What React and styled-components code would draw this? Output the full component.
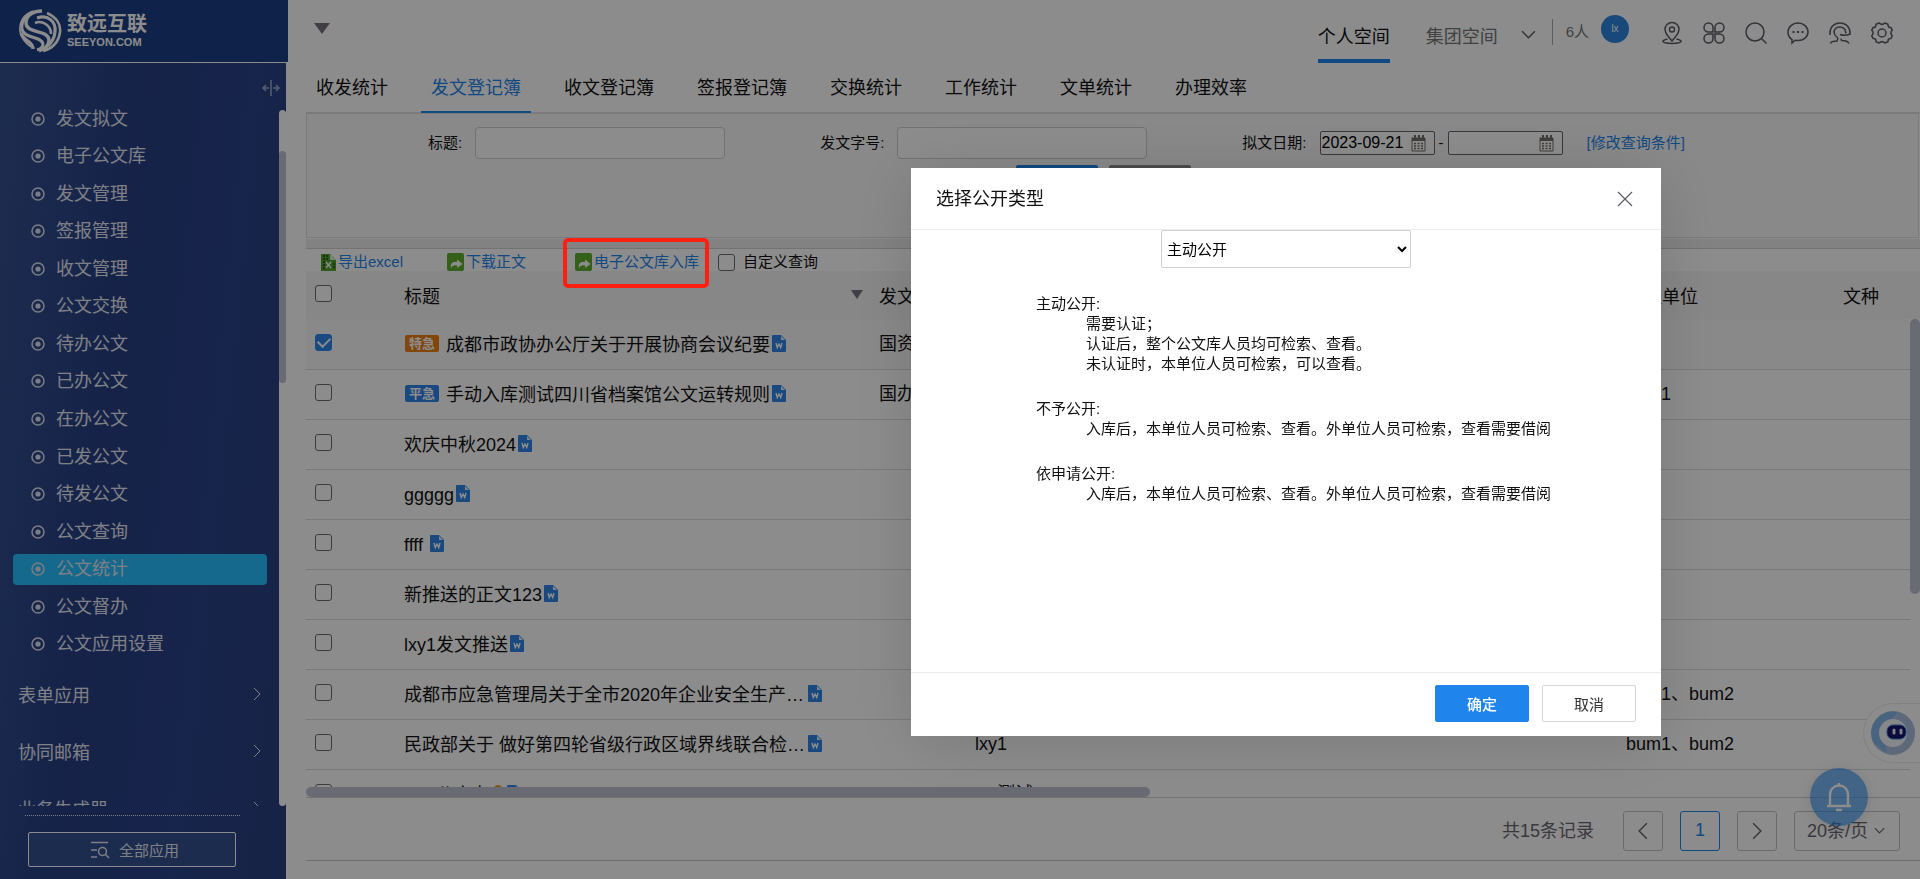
import React from "react";
import styled, { createGlobalStyle } from "styled-components";

const GlobalStyle = createGlobalStyle`
  * {
    box-sizing: border-box;
  }
  body {
    margin: 0;
    background: #fff;
    color: #111;
    font-family: "Liberation Sans", "Noto Sans CJK SC", sans-serif;
    font-size: 18px;
    line-height: 24px;
  }
  button, input, select {
    font-family: inherit;
    margin: 0;
  }
  a {
    text-decoration: none;
  }
  ul, dl, dd {
    margin: 0;
    padding: 0;
    list-style: none;
  }
`;

const Page = styled.div`
  display: flex;
  height: 100vh;
  overflow: hidden;
`;

/* ---------- sidebar ---------- */

const Side = styled.aside`
  flex: none;
  width: 288px;
  display: flex;
  flex-direction: column;
`;

const Brand = styled.div`
  display: flex;
  align-items: center;
  gap: 5px;
  height: 63px;
  padding-left: 18px;
  background: #1d3e85;
  border-bottom: 1px solid #fff;
  color: #fff;
`;

const BrandName = styled.div`
  font-size: 20px;
  font-weight: 700;
  line-height: 22px;
`;

const BrandSite = styled.div`
  font-size: 11px;
  font-weight: 700;
  line-height: 14px;
`;

const Nav = styled.nav`
  flex: 1;
  min-height: 0;
  margin-right: 2px;
  display: flex;
  flex-direction: column;
  background: linear-gradient(96deg, #35528f 0, #2d468b 24%, #283f84 38%, #2b4289 70%, #29407f 100%);
  color: #fff;
`;

const Collapse = styled.button`
  align-self: flex-end;
  height: 37px;
  padding: 12px 6px 0 0;
  border: 0;
  background: none;
  color: #a3aed2;
  line-height: 0;
`;

const NavScroll = styled.div`
  flex: 1;
  min-height: 0;
  display: flex;
  justify-content: space-between;
  padding-left: 13px;
  overflow: hidden;
`;

const NavBody = styled.div`
  width: 254px;
`;

const Menu = styled.ul`
  display: grid;
  grid-auto-rows: 1fr;
  align-items: center;
  height: 563px;
`;

const MenuLink = styled.a`
  display: flex;
  align-items: center;
  gap: 11px;
  height: 31px;
  padding-left: 18px;
  border-radius: 4px;
  color: #e6e9f2;
  background: ${(p) => (p.$active ? "#26bfff" : "none")};
`;

const Group = styled.button`
  display: flex;
  align-items: center;
  justify-content: space-between;
  width: 100%;
  height: 57px;
  padding: 0 3px 0 5px;
  border: 0;
  background: none;
  color: #e6e9f2;
  font-size: 18px;
`;

const Groups = styled.div`
  margin-top: 2px;
`;

const NavTrack = styled.div`
  width: 7px;
  margin-top: 10px;
  padding-top: 41px;
  border-radius: 4px;
  background: #fff;
`;

const NavThumb = styled.div`
  height: 232px;
  border-radius: 4px;
  background: #bdc1d3;
`;

const NavFoot = styled.div`
  margin: 9px 46px 12px 25px;
  padding: 16px 4px 0 3px;
  border-top: 1px dotted #dfe3ee;
`;

const AllApps = styled.button`
  display: flex;
  align-items: center;
  justify-content: center;
  gap: 10px;
  width: 100%;
  height: 35px;
  padding: 0 0 0 6px;
  border: 1px solid #fff;
  border-radius: 2px;
  background: #34508f;
  color: #e6e9f2;
  font-size: 15px;
`;

/* ---------- top bar ---------- */

const Main = styled.main`
  flex: 1;
  min-width: 0;
  display: flex;
  flex-direction: column;
  padding-left: 18px;
`;

const TopBar = styled.header`
  flex: none;
  display: flex;
  align-items: center;
  height: 63px;
  padding: 0 27px 0 8px;
`;

const Caret = styled.span`
  border: ${(p) => p.$size}px solid transparent;
  border-top: ${(p) => p.$size + 3}px solid #77717c;
  border-bottom: 0;
`;

const CaretButton = styled.button`
  display: flex;
  margin: 0 auto 6px 0;
  padding: 0;
  border: 0;
  background: none;
`;

const Spaces = styled.div`
  display: flex;
  align-self: stretch;
  gap: 36px;
  margin-right: 23px;
`;

const Space = styled.a`
  display: flex;
  align-items: center;
  padding-top: 15px;
  border-bottom: 4px solid ${(p) => (p.$active ? "#1f85ec" : "transparent")};
  color: ${(p) => (p.$active ? "#111" : "#777")};
`;

const PlainButton = styled.button`
  display: flex;
  padding: ${(p) => p.$drop || 0}px 0 0;
  border: 0;
  background: none;
  color: #5f5c66;
`;

const Online = styled.span`
  display: flex;
  align-items: center;
  height: 26px;
  margin: 0 12px 0 16px;
  padding-left: 13px;
  border-left: 1px solid #aaa;
  color: #777;
  font-size: 15px;
`;

const Avatar = styled.span`
  width: 28px;
  height: 28px;
  margin: 0 32px 6px 0;
  border-radius: 50%;
  background: #2e86e0;
  color: #fff;
  font-size: 10px;
  line-height: 28px;
  text-align: center;
`;

const Tools = styled.div`
  display: flex;
  gap: 20px;
  padding-top: 2px;
`;

const Tabs = styled.nav`
  flex: none;
  display: flex;
  gap: 23px;
  height: 50px;
  box-shadow: inset 0 -1px #e0e0e0;
`;

const Tab = styled.a`
  padding: 13px 10px 0;
  color: ${(p) => (p.$active ? "#1f85ec" : "#111")};
  border-bottom: 2px solid ${(p) => (p.$active ? "#1f85ec" : "transparent")};
`;

/* ---------- query form ---------- */

const Query = styled.form`
  flex: none;
  height: 125px;
  margin-right: 1px;
  padding-top: 13px;
  border: 1px solid #dedede;
  background: #f9f9f9;
  font-size: 15px;
`;

const Fields = styled.div`
  display: flex;
  align-items: center;
  gap: 95px;
  padding-left: 121px;
`;

const Field = styled.div`
  display: flex;
  align-items: center;
  gap: 13px;
`;

const TextInput = styled.input`
  width: 250px;
  height: 32px;
  padding: 0 8px;
  border: 1px solid #d0d0d6;
  border-radius: 4px;
  background: #fff;
  font-size: 15px;
`;

const DateRange = styled.div`
  display: flex;
  align-items: center;
  gap: 4px;
`;

const DateBox = styled.div`
  display: flex;
  align-items: center;
  width: 115px;
  height: 24px;
  border: 1px solid #6d6270;
  border-radius: 2px;
  background: #fff;
`;

const DateInput = styled.input`
  width: 90px;
  padding: 0 1px;
  border: 0;
  outline: 0;
  background: none;
  font-size: 16px;
`;

const BlueLink = styled.a`
  color: #1f85ec;
  margin-left: ${(p) => p.$indent || 0}px;
`;

const QueryButtons = styled.div`
  display: flex;
  justify-content: center;
  gap: 11px;
  padding: 6px 18px 0 0;
`;

const QueryButton = styled.button`
  width: 82px;
  height: 32px;
  border: 0;
  border-radius: 2px;
  background: ${(p) => (p.$primary ? "#1f85ec" : "#8a8a8f")};
  color: #fff;
  font-size: 15px;
`;

const Splitter = styled.div`
  flex: none;
  height: 10px;
  margin-top: 1px;
  background: #ededed;
  border-bottom: 1px solid #cfcfcf;
`;

/* ---------- toolbar and table ---------- */

const Toolbar = styled.div`
  flex: none;
  display: flex;
  align-items: center;
  height: 22px;
  padding: 4px 0 0 15px;
  font-size: 15px;
`;

const Action = styled.button`
  position: relative;
  display: flex;
  align-items: center;
  gap: 2px;
  height: 20px;
  margin-right: ${(p) => p.$gap}px;
  padding: 0;
  border: 0;
  background: none;
  color: #1f85ec;
  font-size: 15px;
  line-height: 20px;
`;

const Highlight = styled.span`
  position: absolute;
  inset: -14px -10px -16px -12px;
  z-index: 20;
  border: 4px solid #ff2012;
  border-radius: 5px;
  pointer-events: none;
`;

const CustomQuery = styled.label`
  display: flex;
  align-items: center;
  gap: 8px;
  line-height: 20px;
`;

const Check = styled.input.attrs({ type: "checkbox" })`
  appearance: none;
  display: inline-grid;
  place-content: center;
  width: 17px;
  height: 17px;
  border: 1px solid #6e6e74;
  border-radius: 3px;
  background: #fff;
  vertical-align: middle;
  &:checked {
    border-color: #2e86ec;
    background: #2e86ec;
  }
  &:checked::after {
    content: "";
    width: 6px;
    height: 10px;
    margin-bottom: 2px;
    border: solid #fff;
    border-width: 0 2px 2px 0;
    transform: rotate(45deg);
  }
`;

const Grid = styled.section`
  flex: 1;
  min-height: 0;
  display: flex;
`;

const GridView = styled.div`
  flex: 1;
  min-width: 0;
  overflow: hidden;
`;

const Table = styled.table`
  width: 100%;
  table-layout: fixed;
  border-collapse: collapse;
  th, td {
    padding: 0 8px;
    text-align: left;
    font-weight: 400;
    white-space: nowrap;
  }
  th {
    height: 48px;
    padding-top: 4px;
    background: #f6f6f6;
  }
  td {
    height: 50px;
    border-bottom: 1px solid #dddde2;
  }
  th:first-child, td:first-child {
    padding: 0 0 6px 9px;
  }
`;

const Row = styled.tr`
  background: ${(p) => (p.$selected ? "#f9f9f9" : "#fff")};
`;

const HeadCell = styled.div`
  display: flex;
  align-items: center;
  justify-content: space-between;
  ${Caret} {
    margin-bottom: 6px;
  }
`;

const TitleCell = styled.div`
  display: flex;
  align-items: center;
  gap: 2px;
  padding-top: 2px;
  svg {
    flex: none;
    margin-bottom: 3px;
  }
`;

const TitleText = styled.span`
  max-width: 402px;
  overflow: hidden;
  text-overflow: ellipsis;
  white-space: pre;
`;

const Tag = styled.span`
  width: 34px;
  height: 17px;
  margin: 0 5px 3px 1px;
  border-radius: 2px;
  background: ${(p) => p.$color};
  color: #fff;
  font-size: 13px;
  font-weight: 700;
  line-height: 17px;
  text-align: center;
`;

const Track = styled.div`
  width: 10px;
  border-top: 48px solid #f6f6f6;
`;

const Thumb = styled.div`
  height: 275px;
  border-radius: 5px;
  background: #bdc1d3;
`;

const BottomThumb = styled.div`
  flex: none;
  width: 844px;
  height: 10px;
  border-radius: 5px;
  background: #bdc1d3;
`;

const Pager = styled.footer`
  flex: none;
  display: flex;
  align-items: center;
  justify-content: flex-end;
  gap: 17px;
  height: 64px;
  margin-bottom: 18px;
  padding: 3px 20px 0 0;
  border-top: 1px solid #cfcfd2;
  border-bottom: 1px solid #c8c8c8;
  color: #6b6870;
`;

const Total = styled.span`
  margin-right: 12px;
`;

const PageButton = styled.button`
  display: flex;
  align-items: center;
  justify-content: center;
  width: 40px;
  height: 40px;
  padding: 0;
  border: 1px solid ${(p) => (p.$active ? "#1f85ec" : "#c4c4c8")};
  border-radius: 3px;
  background: #fff;
  color: ${(p) => (p.$active ? "#1f85ec" : "#6b6870")};
  font-size: 18px;
`;

const PageSize = styled.label`
  display: flex;
  align-items: center;
  width: 106px;
  height: 40px;
  padding-left: 12px;
  border: 1px solid #c4c4c8;
  border-radius: 3px;
  gap: 4px;
`;

const SizeSelect = styled.select`
  appearance: none;
  width: 63px;
  padding: 0;
  border: 0;
  background: none;
  color: #6b6870;
  font-size: 18px;
`;

/* ---------- floating buttons ---------- */

const Bell = styled.button`
  position: fixed;
  right: 52px;
  bottom: 53px;
  display: flex;
  align-items: center;
  justify-content: center;
  width: 58px;
  height: 58px;
  border: 0;
  border-radius: 50%;
  background: rgba(31, 133, 236, 0.6);
  box-shadow: 0 2px 14px rgba(0, 0, 0, 0.12);
  color: #fff;
`;

const Robot = styled.button`
  position: fixed;
  right: 0;
  bottom: 116px;
  display: flex;
  align-items: center;
  width: 57px;
  height: 60px;
  padding: 0 0 0 4px;
  border: 1px solid #ececec;
  border-right: 0;
  border-radius: 30px 0 0 30px;
  background: #fff;
`;

/* ---------- dialog ---------- */

const Mask = styled.div`
  position: fixed;
  inset: 0;
  z-index: 10;
  display: flex;
  align-items: flex-start;
  justify-content: flex-end;
  padding: 168px 259px 0 0;
  background: rgba(0, 0, 0, 0.45);
`;

const Dialog = styled.div`
  display: flex;
  flex-direction: column;
  width: 750px;
  height: 568px;
  background: #fff;
  box-shadow: 0 6px 60px rgba(0, 0, 0, 0.14);
`;

const DialogHead = styled.div`
  display: flex;
  align-items: center;
  justify-content: space-between;
  height: 62px;
  padding: 0 28px 0 25px;
  border-bottom: 1px solid #ececec;
`;

const DialogBody = styled.div`
  flex: 1;
  display: flex;
  flex-direction: column;
  align-items: center;
  font-size: 15px;
`;

const TypeSelect = styled.select`
  width: 250px;
  height: 38px;
  padding: 0 1px;
  border: 1px solid #d0d0d0;
  border-radius: 2px;
  background: #fff;
  color: #000;
  font-size: 15px;
`;

const Notes = styled.dl`
  align-self: stretch;
  margin-top: 26px;
  padding-left: 125px;
  line-height: 20px;
  dd {
    padding-left: 50px;
  }
  dd + dt {
    margin-top: 25px;
  }
`;

const DialogFoot = styled.div`
  display: flex;
  justify-content: flex-end;
  gap: 13px;
  height: 64px;
  padding: 12px 25px 0;
  border-top: 1px solid #ececec;
`;

const DialogButton = styled.button`
  width: 94px;
  height: 37px;
  border: 1px solid ${(p) => (p.$primary ? "#1f85ec" : "#d6d6d6")};
  border-radius: 2px;
  background: ${(p) => (p.$primary ? "#1f85ec" : "#fff")};
  color: ${(p) => (p.$primary ? "#fff" : "#333")};
  font-size: 15px;
  font-weight: ${(p) => (p.$primary ? 500 : 400)};
`;

/* ---------- icons ---------- */

const Icon = ({ size = 22, box = 22, stroke = 1.5, children }) => (
  <svg
    width={size}
    height={size}
    viewBox={`0 0 ${box} ${box}`}
    fill="none"
    stroke="currentColor"
    strokeWidth={stroke}
    overflow="visible"
    aria-hidden="true"
  >
    {children}
  </svg>
);

const Logo = () => (
  <svg width="44" height="44" viewBox="0 0 44 44" fill="none" stroke="#fff" aria-hidden="true">
    <path d="M15 2 C6 5 1 13 2 22 C3 28 6 33 13 38" strokeWidth="1.6" />
    <path d="M24 2 C14 2 8 7 8 14 C8 25 30 20 31 31 C31 36 27 40 21 42" strokeWidth="3.4" />
    <path d="M17 3 C8 6 3 12 4 20 C6 30 24 27 25 35 C25 38 23 40 19 41" strokeWidth="3" />
    <path d="M3 24 C6 33 15 32 15 40" strokeWidth="3.4" />
    <path d="M19 9 C30 5 38 13 37 22 C37 28 34 33 30 37" strokeWidth="3.2" />
    <path d="M17 14 C24 11 33 16 33 25" strokeWidth="2.6" />
    <path d="M29 4 C38 8 43 15 42 23 C41 33 34 40 25 42" strokeWidth="2.6" />
  </svg>
);

const Dot = () => (
  <Icon size={14} box={14}>
    <circle cx="7" cy="7" r="6" stroke="#dfe3ee" />
    <circle cx="7" cy="7" r="2.6" fill="#dfe3ee" stroke="none" />
  </Icon>
);

const Arrow = ({ dir = "right", size = 14, stroke = 1.4 }) => {
  const d = {
    right: "M4 1 L10 7 L4 13",
    left: "M10 1 L4 7 L10 13",
    down: "M1 4 L7 10 L13 4",
  };
  return (
    <Icon size={size} box={14} stroke={stroke}>
      <path d={d[dir]} />
    </Icon>
  );
};

const WordIcon = () => (
  <svg width="14" height="17" viewBox="0 0 14 17" aria-hidden="true">
    <path d="M0 1 Q0 0 1 0 H9 L14 5 V16 Q14 17 13 17 H1 Q0 17 0 16 Z" fill="#2f86e8" />
    <path d="M9 1 V5 H13 Z" fill="#e8f2ff" />
    <path d="M4 8 L5.300 12.500 L7 9 L8.700 12.500 L10 8" fill="none" stroke="#fff" strokeWidth="1.400" />
  </svg>
);

const KeyIcon = () => (
  <svg width="13" height="17" viewBox="0 0 13 17" fill="none" stroke="#f0a020" strokeWidth="2" aria-hidden="true">
    <circle cx="6" cy="5" r="4" />
    <path d="M6 9 V16 M6 13 H10" />
  </svg>
);

const ExcelIcon = () => (
  <svg width="15" height="17" viewBox="0 0 15 17" aria-hidden="true">
    <path d="M0 0 H9 L15 6 V17 H0 Z" fill="#55a52e" />
    <path d="M9 0 L15 6 H9 Z" fill="#dfeeda" />
    <path d="M2 2 H7 M2 5 H7 M2 8 H4 M2 11 H4 M2 14 H4 M13 9 V15" stroke="#1d4d12" strokeWidth="1.400" strokeDasharray="2 1" />
    <path d="M5 8 L10 14 M10 8 L5 14" stroke="#fff" strokeWidth="1.400" />
  </svg>
);

const ShareIcon = () => (
  <svg width="17" height="18" viewBox="0 0 17 18" aria-hidden="true">
    <rect width="17" height="18" rx="2" fill="#62b030" />
    <path d="M4 15 C3 10 6 8.500 10 9 V6.500 L15.500 11 L10 15 V12.500 C7 12 5 13 4 15 Z" fill="#fff" />
  </svg>
);

const CalendarIcon = () => (
  <svg width="15" height="17" viewBox="0 0 15 17" aria-hidden="true">
    <path d="M1 3 H14 V16 H1 Z" fill="#fff" stroke="#77706c" />
    <path d="M1 3 H14 V6 H1 Z M3 0 H5 V4 H3 Z M7 0 H9 V4 H7 Z M11 0 H13 V4 H11 Z" fill="#77706c" />
    <path d="M3 8.500 H12 M3 11 H12 M3 13.500 H12" stroke="#77706c" strokeWidth="1.4" strokeDasharray="2 1.500" />
  </svg>
);

const toolIcons = [
  {
    name: "定位",
    art: (
      <>
        <path d="M11 19 C7 14 4 11.500 4 7.500 A7 7 0 0 1 18 7.500 C18 11.500 15 14 11 19 Z" />
        <circle cx="11" cy="7.500" r="2.500" />
        <path d="M6.500 17 C-1 18.500 1 21.500 11 21.500 C21 21.500 23 18.500 15.500 17" />
      </>
    ),
  },
  {
    name: "应用",
    art: (
      <>
        <path d="M10 10 H5.500 A4.500 4.500 0 1 1 10 5.500 Z" />
        <path d="M12 10 V5.500 A4.500 4.500 0 1 1 16.500 10 Z" />
        <path d="M10 12 V16.500 A4.500 4.500 0 1 1 5.500 12 Z" />
        <path d="M12 12 H16.500 A4.500 4.500 0 1 1 12 16.500 Z" />
      </>
    ),
  },
  {
    name: "搜索",
    art: (
      <>
        <circle cx="10" cy="10" r="9" />
        <path d="M16.500 16.500 L21.500 21.500" />
      </>
    ),
  },
  {
    name: "消息",
    art: (
      <>
        <path d="M5 21 V17.500 C2.500 16 1 13 1 10 C1 5 5.500 1 11 1 C16.500 1 21 5 21 10 C21 15 16.500 18.500 11 18.500 C10 18.500 9 18.400 8 18.200 Z" />
        <path d="M5.500 10 H7.500 M10 10 H12 M14.500 10 H16.500" strokeWidth="2" />
      </>
    ),
  },
  {
    name: "客服",
    art: (
      <>
        <path d="M1 13 V11 C1 5 5 1 11 1 C17 1 21 5 21 11 V13" />
        <path d="M9 16 C5 14 4 9 6.500 6.500 C9 4 14 4.500 16 7.500 L17 11.500 M11 12.500 C15 14 18 13.500 21 12" />
        <path d="M1.500 21.500 C2 19.500 4 19 8 19 L9 16 M12 16.500 L12.500 18.500 C16 18.500 19 19 20 21.500" />
      </>
    ),
  },
  {
    name: "设置",
    art: (
      <>
        <circle cx="11" cy="11" r="4" />
        <path
          d="M8.200 1 Q11 3.800 13.800 1 L17 2.300 Q16.800 5.800 20 5.600 L21.300 8.300 Q18.500 11 21.300 13.700 L20 16.400 Q16.800 16.200 17 19.700 L13.800 21 Q11 18.200 8.200 21 L5 19.700 Q5.200 16.200 2 16.400 L0.700 13.700 Q3.500 11 0.700 8.300 L2 5.600 Q5.200 5.800 5 2.300 Z"
          strokeLinejoin="round"
        />
      </>
    ),
  },
];

/* ---------- data ---------- */

const menu = [
  "发文拟文",
  "电子公文库",
  "发文管理",
  "签报管理",
  "收文管理",
  "公文交换",
  "待办公文",
  "已办公文",
  "在办公文",
  "已发公文",
  "待发公文",
  "公文查询",
  "公文统计",
  "公文督办",
  "公文应用设置",
];

const groups = ["表单应用", "协同邮箱", "业务生成器"];

const tabs = [
  "收发统计",
  "发文登记簿",
  "收文登记簿",
  "签报登记簿",
  "交换统计",
  "工作统计",
  "文单统计",
  "办理效率",
];

const rows = [
  { tag: "特急", color: "#ec8010", title: "成都市政协办公厅关于开展协商会议纪要", no: "国资", checked: true },
  { tag: "平急", color: "#2e86ec", title: "手动入库测试四川省档案馆公文运转规则", no: "国办", unit: "bum1" },
  { title: "欢庆中秋2024" },
  { title: "ggggg" },
  { title: "ffff " },
  { title: "新推送的正文123" },
  { title: "lxy1发文推送" },
  { title: "成都市应急管理局关于全市2020年企业安全生产工作情况的通知", author: "lxy1", unit: "bum1、bum2" },
  { title: "民政部关于 做好第四轮省级行政区域界线联合检查工作的通知", author: "lxy1", unit: "bum1、bum2" },
  { title: "lxy1公文办", author: "lxy测试", keyed: true },
];

const notes = [
  {
    name: "主动公开:",
    lines: ["需要认证；", "认证后，整个公文库人员均可检索、查看。", "未认证时，本单位人员可检索，可以查看。"],
  },
  { name: "不予公开:", lines: ["入库后，本单位人员可检索、查看。外单位人员可检索，查看需要借阅"] },
  { name: "依申请公开:", lines: ["入库后，本单位人员可检索、查看。外单位人员可检索，查看需要借阅"] },
];

/* ---------- sections ---------- */

const Sidebar = () => (
  <Side>
    <Brand>
      <Logo />
      <div>
        <BrandName>致远互联</BrandName>
        <BrandSite>SEEYON.COM</BrandSite>
      </div>
    </Brand>
    <Nav>
      <Collapse aria-label="收起菜单">
        <svg width="18" height="16" viewBox="0 0 18 16" fill="none" stroke="currentColor" aria-hidden="true">
          <path d="M9 0 V16 M2 8 H7 M11 8 H16" strokeWidth="1.5" />
          <path d="M4 5 L1 8 L4 11 M14 5 L17 8 L14 11" strokeWidth="1.5" />
        </svg>
      </Collapse>
      <NavScroll>
        <NavBody>
          <Menu>
            {menu.map((name) => (
              <li key={name}>
                <MenuLink href="#" $active={name === "公文统计"}>
                  <Dot />
                  {name}
                </MenuLink>
              </li>
            ))}
          </Menu>
          <Groups>
            {groups.map((name) => (
              <Group key={name}>
                {name}
                <Arrow stroke={1} />
              </Group>
            ))}
          </Groups>
        </NavBody>
        <NavTrack>
          <NavThumb />
        </NavTrack>
      </NavScroll>
      <NavFoot>
        <AllApps>
          <Icon size={18} box={18}>
            <path d="M0 1.500 H17 M0 9 H6 M0 16 H6" />
            <circle cx="11.500" cy="10.500" r="4" />
            <path d="M14.500 13.500 L18 17" />
          </Icon>
          全部应用
        </AllApps>
      </NavFoot>
    </Nav>
  </Side>
);

const Header = () => (
  <TopBar>
    <CaretButton aria-label="展开">
      <Caret $size={8} />
    </CaretButton>
    <Spaces>
      <Space href="#" $active>个人空间</Space>
      <Space href="#">集团空间</Space>
    </Spaces>
    <PlainButton aria-label="更多空间" $drop={6}>
      <Arrow dir="down" size={15} />
    </PlainButton>
    <Online>6人</Online>
    <Avatar>lx</Avatar>
    <Tools>
      {toolIcons.map((t) => (
        <PlainButton key={t.name} aria-label={t.name}>
          <Icon>{t.art}</Icon>
        </PlainButton>
      ))}
    </Tools>
  </TopBar>
);

const QueryForm = () => (
  <Query>
    <Fields>
      <Field>
        <label htmlFor="q-title">标题:</label>
        <TextInput id="q-title" />
      </Field>
      <Field>
        <label htmlFor="q-no">发文字号:</label>
        <TextInput id="q-no" />
      </Field>
      <Field>
        <label htmlFor="q-from">拟文日期:</label>
        <DateRange>
          <DateBox>
            <DateInput id="q-from" defaultValue="2023-09-21" />
            <CalendarIcon />
          </DateBox>
          -
          <DateBox>
            <DateInput aria-label="结束日期" />
            <CalendarIcon />
          </DateBox>
          <BlueLink href="#" $indent={20}>[修改查询条件]</BlueLink>
        </DateRange>
      </Field>
    </Fields>
    <QueryButtons>
      <QueryButton type="button" $primary>查询</QueryButton>
      <QueryButton type="button">重置</QueryButton>
    </QueryButtons>
  </Query>
);

const DocTable = () => (
  <Table>
    <colgroup>
      <col style={{ width: 90 }} />
      <col style={{ width: 475 }} />
      <col style={{ width: 96 }} />
      <col />
      <col style={{ width: 217 }} />
      <col style={{ width: 75 }} />
    </colgroup>
    <thead>
      <tr>
        <th><Check aria-label="全选" /></th>
        <th>
          <HeadCell>
            标题
            <Caret $size={6} />
          </HeadCell>
        </th>
        <th>发文字号</th>
        <th>拟稿人</th>
        <th>主送单位</th>
        <th>文种</th>
      </tr>
    </thead>
    <tbody>
      {rows.map((r) => (
        <Row key={r.title} $selected={r.checked}>
          <td><Check aria-label={r.title} defaultChecked={r.checked} /></td>
          <td>
            <TitleCell>
              {r.tag && <Tag $color={r.color}>{r.tag}</Tag>}
              <TitleText>{r.title}</TitleText>
              {r.keyed && <KeyIcon />}
              <WordIcon />
            </TitleCell>
          </td>
          <td>{r.no}</td>
          <td>{r.author}</td>
          <td>{r.unit}</td>
          <td />
        </Row>
      ))}
    </tbody>
  </Table>
);

const TypeDialog = () => (
  <Mask>
    <Dialog role="dialog" aria-labelledby="dialog-title">
      <DialogHead>
        <span id="dialog-title">选择公开类型</span>
        <PlainButton aria-label="关闭">
          <Icon size={16} box={16} stroke={1.2}>
            <path d="M1 1 L15 15 M15 1 L1 15" />
          </Icon>
        </PlainButton>
      </DialogHead>
      <DialogBody>
        <TypeSelect aria-label="公开类型">
          <option>主动公开</option>
          <option>不予公开</option>
          <option>依申请公开</option>
        </TypeSelect>
        <Notes>
          {notes.map((n) => (
            <React.Fragment key={n.name}>
              <dt>{n.name}</dt>
              <dd>
                {n.lines.map((line) => (
                  <div key={line}>{line}</div>
                ))}
              </dd>
            </React.Fragment>
          ))}
        </Notes>
      </DialogBody>
      <DialogFoot>
        <DialogButton $primary>确定</DialogButton>
        <DialogButton>取消</DialogButton>
      </DialogFoot>
    </Dialog>
  </Mask>
);

const App = () => {
  return (
    <>
      <GlobalStyle />
      <Page>
        <Sidebar />
        <Main>
          <Header />
          <Tabs>
            {tabs.map((name) => (
              <Tab key={name} href="#" $active={name === "发文登记簿"}>
                {name}
              </Tab>
            ))}
          </Tabs>
          <QueryForm />
          <Splitter />
          <Toolbar>
            <Action $gap={44}><ExcelIcon />导出excel</Action>
            <Action $gap={49}><ShareIcon />下载正文</Action>
            <Action $gap={19}>
              <ShareIcon />
              电子公文库入库
              <Highlight />
            </Action>
            <CustomQuery>
              <Check />
              自定义查询
            </CustomQuery>
          </Toolbar>
          <Grid>
            <GridView>
              <DocTable />
            </GridView>
            <Track>
              <Thumb />
            </Track>
          </Grid>
          <BottomThumb />
          <Pager>
            <Total>共15条记录</Total>
            <PageButton aria-label="上一页"><Arrow dir="left" size={18} stroke={1.2} /></PageButton>
            <PageButton $active>1</PageButton>
            <PageButton aria-label="下一页"><Arrow size={18} stroke={1.2} /></PageButton>
            <PageSize>
              <SizeSelect aria-label="每页条数">
                <option>20条/页</option>
              </SizeSelect>
              <Arrow dir="down" size={11} />
            </PageSize>
          </Pager>
        </Main>
      </Page>
      <Robot aria-label="智能助手">
        <svg width="50" height="50" viewBox="0 0 50 50" aria-hidden="true">
          <circle cx="25" cy="25" r="22" fill="#a9bfdf" />
          <path d="M5 34 A22 22 0 0 1 30 4 Q16 14 18 44 Z" fill="#85b6ea" />
          <circle cx="25" cy="25" r="14" fill="#f4f6fa" />
          <rect x="19" y="17" width="19" height="14" rx="6" fill="#14146a" stroke="#3f7fd6" />
          <path d="M26 22 V25 M33 22 V25" stroke="#e8e8ff" strokeWidth="3" strokeLinecap="round" />
        </svg>
      </Robot>
      <Bell aria-label="通知">
        <svg width="26" height="30" viewBox="0 0 26 30" fill="none" stroke="#fff" strokeWidth="2.4" aria-hidden="true">
          <path d="M1 24 H25 M4 24 V13 C4 7 8 3.500 13 3.500 C18 3.500 22 7 22 13 V24" />
          <path d="M13 1 V4 M10 28 H16" />
        </svg>
      </Bell>
      <TypeDialog />
    </>
  );
};

export default App;
